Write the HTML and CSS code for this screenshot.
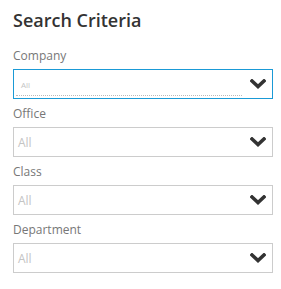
FILE: index.html
```html
<!DOCTYPE html>
<html lang="en">
  <head>
    <meta charset="UTF-8" />
    <title>Search Criteria</title>
    <link rel="stylesheet" href="styles.css">
  </head>
  <body>
    <div class="criteria">
      <h2>Search Criteria</h2>

      <label class="field-label">Company</label>
      <div class="select focused">
        <span class="placeholder small">All</span>
        <svg class="chevron" width="16" height="10" viewBox="0 0 16 10">
          <polyline points="2,2 8,7.5 14,2" />
        </svg>
      </div>

      <label class="field-label">Office</label>
      <div class="select">
        <span class="placeholder">All</span>
        <svg class="chevron" width="16" height="10" viewBox="0 0 16 10">
          <polyline points="2,2 8,7.5 14,2" />
        </svg>
      </div>

      <label class="field-label">Class</label>
      <div class="select">
        <span class="placeholder">All</span>
        <svg class="chevron" width="16" height="10" viewBox="0 0 16 10">
          <polyline points="2,2 8,7.5 14,2" />
        </svg>
      </div>

      <label class="field-label">Department</label>
      <div class="select">
        <span class="placeholder">All</span>
        <svg class="chevron" width="16" height="10" viewBox="0 0 16 10">
          <polyline points="2,2 8,7.5 14,2" />
        </svg>
      </div>
    </div>
  </body>
</html>
```

FILE: styles.css
```css
body {
  margin: 0;
  font-family: "Open Sans", sans-serif;
  background: #fff;
}
.criteria {
  padding: 8px 8px 0 13px;
  display: flex;
  flex-direction: column;
}
h2 {
  margin: 0 0 16px 0;
  font-size: 18px;
  font-weight: 600;
  color: #333;
  line-height: 24px;
}
.field-label {
  font-size: 12px;
  color: #777;
  line-height: 16px;
  margin-bottom: 5px;
}
.select {
  position: relative;
  height: 28px;
  border: 1px solid #ccc;
  display: flex;
  align-items: center;
  justify-content: space-between;
  padding: 0 6px 0 4px;
  margin-bottom: 7px;
}
.select.focused {
  border-color: #1a9ad6;
}
.select.focused::after {
  content: "";
  position: absolute;
  left: 2px;
  right: 30px;
  bottom: 2px;
  border-bottom: 1px dotted #bbb;
}
.placeholder {
  font-size: 12px;
  color: #c4c4c4;
}
.placeholder.small {
  font-size: 8px;
  margin-left: 3px;
}
.chevron polyline {
  fill: none;
  stroke: #333;
  stroke-width: 3.6;
  stroke-linecap: square;
}
```
